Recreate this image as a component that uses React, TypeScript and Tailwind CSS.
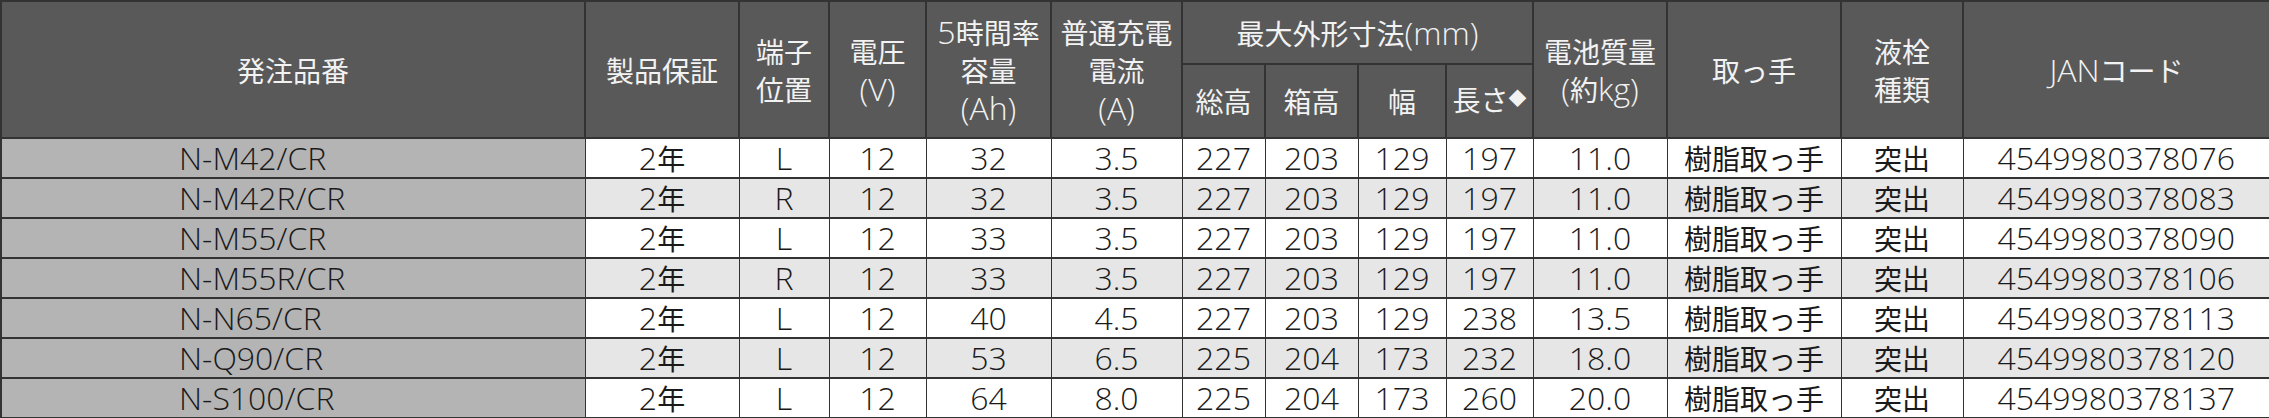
import React from 'react';

type Row = {
  model: string;
  term: string;
  cap: string;
  cur: string;
  total: string;
  box: string;
  width: string;
  len: string;
  mass: string;
  jan: string;
};

const rows: Row[] = [
  { model: 'N-M42/CR', term: 'L', cap: '32', cur: '3.5', total: '227', box: '203', width: '129', len: '197', mass: '11.0', jan: '4549980378076' },
  { model: 'N-M42R/CR', term: 'R', cap: '32', cur: '3.5', total: '227', box: '203', width: '129', len: '197', mass: '11.0', jan: '4549980378083' },
  { model: 'N-M55/CR', term: 'L', cap: '33', cur: '3.5', total: '227', box: '203', width: '129', len: '197', mass: '11.0', jan: '4549980378090' },
  { model: 'N-M55R/CR', term: 'R', cap: '33', cur: '3.5', total: '227', box: '203', width: '129', len: '197', mass: '11.0', jan: '4549980378106' },
  { model: 'N-N65/CR', term: 'L', cap: '40', cur: '4.5', total: '227', box: '203', width: '129', len: '238', mass: '13.5', jan: '4549980378113' },
  { model: 'N-Q90/CR', term: 'L', cap: '53', cur: '6.5', total: '225', box: '204', width: '173', len: '232', mass: '18.0', jan: '4549980378120' },
  { model: 'N-S100/CR', term: 'L', cap: '64', cur: '8.0', total: '225', box: '204', width: '173', len: '260', mass: '20.0', jan: '4549980378137' },
];

const widths = [584, 154, 90, 97, 125, 131, 83, 93, 88, 87, 134, 174, 122, 307];

// latin glyphs in the source font are taller and wider than the kana/kanji around them
function L({ children }: { children: React.ReactNode }) {
  return (
    <span className="inline-block font-['Open_Sans',sans-serif] text-[32px] font-light leading-[36px]">
      {children}
    </span>
  );
}

const th = 'border-2 border-[#333333] bg-[#595959] p-0 text-center align-middle font-normal text-[#f2f2f2]';
const td = 'border-x border-y-2 border-[#333333] p-0 text-center align-middle font-normal text-[#1a1a1a]';

export default function App() {
  return (
    <div className="w-[2269px] bg-white font-['Noto_Sans_CJK_JP',sans-serif] text-[28px]">
      <table className="w-[2269px] table-fixed border-collapse border-2 border-[#333333]">
        <colgroup>
          {widths.map((w, i) => (
            <col key={i} style={{ width: w }} />
          ))}
        </colgroup>
        <thead className="leading-[38px]">
          <tr className="h-[63px]">
            <th rowSpan={2} className={th}>発注品番</th>
            <th rowSpan={2} className={th}>製品保証</th>
            <th rowSpan={2} className={th}>
              端子
              <br />
              位置
            </th>
            <th rowSpan={2} className={th}>
              電圧
              <br />
              <L>(V)</L>
            </th>
            <th rowSpan={2} className={th}>
              <L>5</L>時間率
              <br />
              容量
              <br />
              <L>(Ah)</L>
            </th>
            <th rowSpan={2} className={th}>
              普通充電
              <br />
              電流
              <br />
              <L>(A)</L>
            </th>
            <th colSpan={4} className={th}>
              最大外形寸法<L>(mm)</L>
            </th>
            <th rowSpan={2} className={th}>
              電池質量
              <br />
              <L>(</L>約<L>kg)</L>
            </th>
            <th rowSpan={2} className={th}>取っ手</th>
            <th rowSpan={2} className={th}>
              液栓
              <br />
              種類
            </th>
            <th rowSpan={2} className={th}>
              <L>JAN</L>コード
            </th>
          </tr>
          <tr className="h-[74px]">
            <th className={th}>総高</th>
            <th className={th}>箱高</th>
            <th className={th}>幅</th>
            <th className={th}>
              長さ<span className="relative -top-[6px] text-[18px]">◆</span>
            </th>
          </tr>
        </thead>
        <tbody className="leading-[36px]">
          {rows.map((r, i) => {
            const bg = i % 2 === 0 ? 'bg-white' : 'bg-[#e6e6e6]';
            return (
              <tr key={r.model} className={`h-[40px] ${bg}`}>
                <td className={`${td} bg-[#b4b4b4] pl-[177px] text-left`}>
                  <L>{r.model}</L>
                </td>
                <td className={td}>
                  <L>2</L>年
                </td>
                <td className={td}><L>{r.term}</L></td>
                <td className={td}><L>12</L></td>
                <td className={td}><L>{r.cap}</L></td>
                <td className={td}><L>{r.cur}</L></td>
                <td className={td}><L>{r.total}</L></td>
                <td className={td}><L>{r.box}</L></td>
                <td className={td}><L>{r.width}</L></td>
                <td className={td}><L>{r.len}</L></td>
                <td className={td}><L>{r.mass}</L></td>
                <td className={td}>樹脂取っ手</td>
                <td className={td}>突出</td>
                <td className={td}><L>{r.jan}</L></td>
              </tr>
            );
          })}
        </tbody>
      </table>
    </div>
  );
}
